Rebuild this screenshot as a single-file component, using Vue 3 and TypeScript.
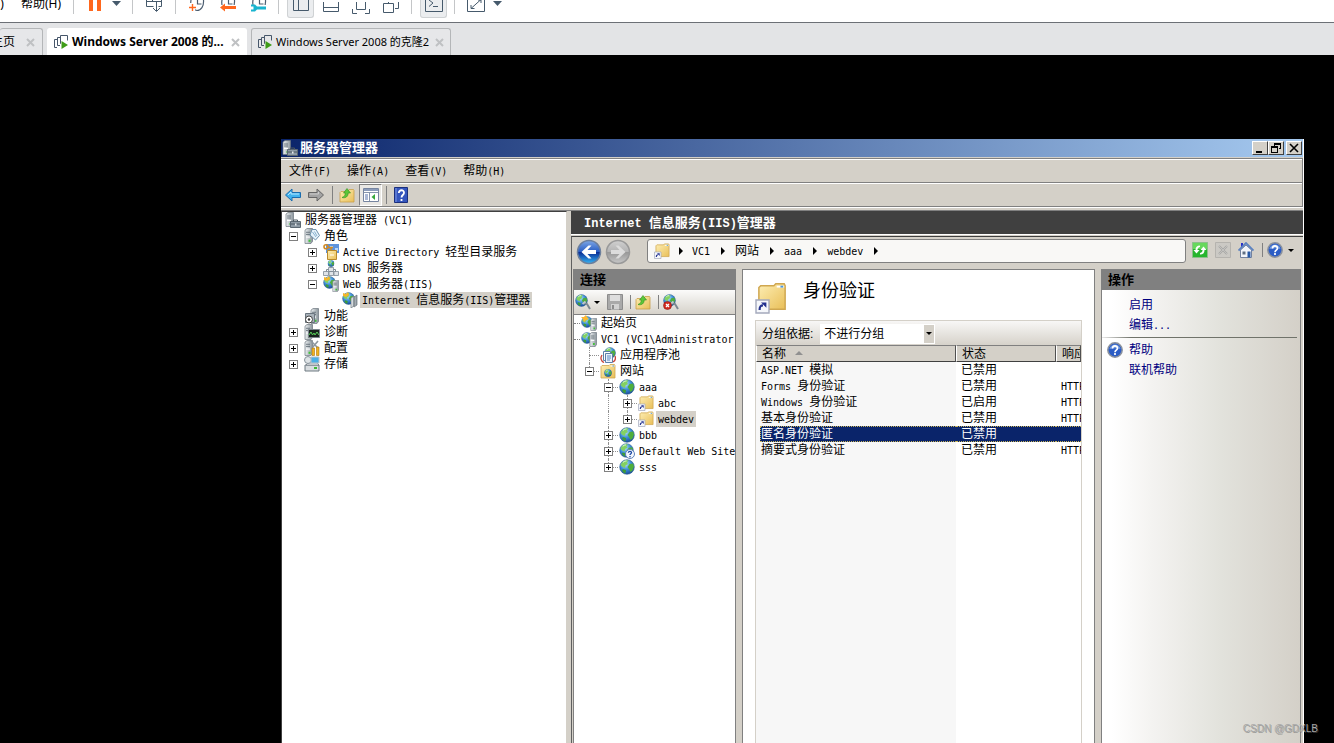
<script setup lang="ts">
import { h, ref } from 'vue'

type Cell = '' | 'v' | 't' | 'l'
interface Node {
  label: string
  icon: string
  level: number
  cells?: Cell[]
  open?: boolean
  selected?: boolean
}

/* Splits mixed text so that Latin runs use the half-width face. */
const Mix = (props: { t: string }) =>
  h(
    'span',
    { class: 'mix' },
    (props.t.match(/[\x00-\x7f]+|[^\x00-\x7f]+/g) ?? []).map((run) =>
      h('span', { class: run.charCodeAt(0) < 128 ? 'lat' : 'cjk' }, run),
    ),
  )
Mix.props = ['t']

const menus = ['文件(F)', '操作(A)', '查看(V)', '帮助(H)']

const serverTree: Node[] = [
  { label: '服务器管理器 (VC1)', icon: 'toolbox', level: 0 },
  { label: '角色', icon: 'roles', level: 1, open: true },
  { label: 'Active Directory 轻型目录服务', icon: 'ad', level: 2, open: false },
  { label: 'DNS 服务器', icon: 'dns', level: 2, open: false },
  { label: 'Web 服务器(IIS)', icon: 'web', level: 2, open: true },
  { label: 'Internet 信息服务(IIS)管理器', icon: 'iis', level: 3, selected: true },
  { label: '功能', icon: 'feature', level: 1 },
  { label: '诊断', icon: 'diag', level: 1, open: false },
  { label: '配置', icon: 'config', level: 1, open: false },
  { label: '存储', icon: 'storage', level: 1, open: false },
]

const siteTree: Node[] = [
  { label: '起始页', icon: 'start', level: 0, cells: [] },
  { label: 'VC1 (VC1\\Administrator)', icon: 'vc', level: 0, cells: [] },
  { label: '应用程序池', icon: 'pool', level: 1, cells: ['t'] },
  { label: '网站', icon: 'sites', level: 1, cells: ['l'], open: true },
  { label: 'aaa', icon: 'globe', level: 2, cells: ['', 't'], open: true },
  { label: 'abc', icon: 'link', level: 3, cells: ['', 'v', 't'], open: false },
  { label: 'webdev', icon: 'link', level: 3, cells: ['', 'v', 'l'], open: false, selected: true },
  { label: 'bbb', icon: 'globe', level: 2, cells: ['', 't'], open: false },
  { label: 'Default Web Site', icon: 'globeq', level: 2, cells: ['', 't'], open: false },
  { label: 'sss', icon: 'globe', level: 2, cells: ['', 'l'], open: false },
]

const crumbs = ['VC1', '网站', 'aaa', 'webdev']

const rows = [
  { name: 'ASP.NET 模拟', state: '已禁用', reply: '' },
  { name: 'Forms 身份验证', state: '已禁用', reply: 'HTTP 302' },
  { name: 'Windows 身份验证', state: '已启用', reply: 'HTTP 401' },
  { name: '基本身份验证', state: '已禁用', reply: 'HTTP 401' },
  { name: '匿名身份验证', state: '已禁用', reply: '' },
  { name: '摘要式身份验证', state: '已禁用', reply: 'HTTP 401' },
]
const current = ref(4)
const group = ref('不进行分组')
</script>

<template>
  <div class="page">
    <svg class="defs" aria-hidden="true">
      <defs>
        <linearGradient id="gy" x1="0" y1="0" x2="1" y2="1"><stop offset="0" stop-color="#fdeeb4" /><stop offset="1" stop-color="#e9bf58" /></linearGradient>
        <linearGradient id="gs" x1="0" y1="0" x2="1" y2="0"><stop offset="0" stop-color="#eef1f3" /><stop offset="1" stop-color="#8b959c" /></linearGradient>
        <radialGradient id="gb" cx=".4" cy=".3" r=".8"><stop offset="0" stop-color="#b5e6fc" /><stop offset=".5" stop-color="#3a8ad6" /><stop offset="1" stop-color="#123c8c" /></radialGradient>
        <linearGradient id="gn" x1="0" y1="0" x2="0" y2="1"><stop offset="0" stop-color="#7da7e6" /><stop offset=".48" stop-color="#2b5fc4" /><stop offset=".52" stop-color="#0b2f96" /><stop offset="1" stop-color="#35b4f4" /></linearGradient>
        <linearGradient id="gg" x1="0" y1="0" x2="0" y2="1"><stop offset="0" stop-color="#d0d0d0" /><stop offset=".48" stop-color="#b4b4b4" /><stop offset=".52" stop-color="#989898" /><stop offset="1" stop-color="#c8c8c8" /></linearGradient>
      </defs>
      <symbol id="srv" viewBox="0 0 9 15" preserveAspectRatio="none"><path d="M1 2 3 .5h5.500v12L7 14.500H1z" fill="url(#gs)" stroke="#6d777f" stroke-width=".7" /><path d="M2 4h4M2 6h4" stroke="#59656e" stroke-width=".8" /><path d="M2 8.500h4" stroke="#fff" /><path d="M4.500 11h2v2h-2z" fill="#43c33c" /></symbol>
      <symbol id="globe" viewBox="0 0 16 16"><circle cx="8" cy="8" r="7.300" fill="url(#gb)" stroke="#2b5c8f" stroke-width=".6" /><path d="M3 3.500C5 1 8 1 9.500 1.500L8 3.500l1 1.500-2.500 1.500L6 9 3.500 8 1.500 6z" fill="#83d162" /><path d="m10.500 5 3.500-.500 1 3-1.500 4-2 1.500-1.500-3-1.500-2z" fill="#4fae3c" /><path d="m4 10 3 1-.500 3.500C4.500 14 3.500 12.500 3 11z" fill="#3e9c38" /><path d="M4 3.500c1-1 2-1.500 3.500-1.500" stroke="#e2ffe0" fill="none" /></symbol>
      <symbol id="toolbox" viewBox="0 0 16 16"><use href="#srv" x="0" y="0" width="9" height="15" /><path d="M5.500 9.500h10v6h-10z" fill="#8f9ba6" stroke="#5c6872" /><path d="M8.500 9.500V8h4v1.500M6 12h9" stroke="#4a5660" fill="none" /><path d="M10 11.500h1.500v2H10z" fill="#e8ecef" /></symbol>
      <symbol id="roles" viewBox="0 0 16 16"><use href="#srv" x="0" y="0" width="9" height="16" /><path d="m8 1.500 4 0 3.500 6-4 4.500L6 7z" fill="#e6f2fa" stroke="#6e93ad" /><path d="m8.500 4 3.500 5M10.500 3.500 13 8" stroke="#8bb3cf" /></symbol>
      <symbol id="ad" viewBox="0 0 16 16"><path d="M3 0h13v9H3z" fill="#5e93dc" /><path d="M7 2h3v2H7zM12 4h3v3h-3z" fill="#b8d5f7" /><path d="M4.500 6.500h9v9h-9z" fill="url(#gy)" stroke="#b98a2b" /><circle cx="3" cy="2.800" r="2" fill="none" stroke="#d28b25" stroke-width="1.600" /><path d="M4.500 3.500H10M8 4v2" stroke="#d28b25" stroke-width="1.500" /><path d="M7 11h4" stroke="#fff" /></symbol>
      <symbol id="dns" viewBox="0 0 16 16"><use href="#globe" x="4.500" y="0" width="7" height="7" /><path d="M8 7v3M3.500 13V9.500h9V13" stroke="#7e8a94" fill="none" /><path d="M5.500 7.500h5v4h-5zM.5 11.500h5v4h-5zM6 11.500h4.500v4H6zM11 11.500h4.500v4H11z" fill="#dfe4e8" stroke="#808c96" stroke-width=".8" /></symbol>
      <symbol id="web" viewBox="0 0 16 16"><use href="#globe" x="0" y="0" width="13" height="13" /><path d="m1 1 3 1 2-2 1 3-3 2-3-1z" fill="#f4b52c" /><use href="#srv" x="9" y="4" width="7" height="12" /></symbol>
      <symbol id="iis" viewBox="0 0 16 16"><use href="#globe" x="0" y="0" width="13" height="13" /><path d="m1 1 3 1 2-2 1 3-3 2-3-1z" fill="#f4b52c" /><path d="m9 6 3-2v10l-3 2zM12 5l3-2v10l-3 2z" fill="url(#gs)" stroke="#6b757d" stroke-width=".7" /></symbol>
      <symbol id="feature" viewBox="0 0 16 16"><use href="#srv" x="6" y="0" width="9" height="16" /><path d="M1.500 5.500h9v9h-9z" fill="#a9b2ba" stroke="#6a757f" /><circle cx="5" cy="11.500" r="3.500" fill="#fff" stroke="#444" /><circle cx="5" cy="11.500" r="1.200" fill="#333" /></symbol>
      <symbol id="diag" viewBox="0 0 16 16"><use href="#srv" x="0" y="0" width="9" height="16" /><path d="M4.500 5.500h11v8h-11z" fill="#17231d" stroke="#7b858c" /><path d="m5 11 2-3 1.500 3L10 9l1 2 2-3 2 3" stroke="#58d05a" fill="none" /></symbol>
      <symbol id="config" viewBox="0 0 16 16"><use href="#srv" x="0" y="0" width="9" height="16" /><path d="m7 1 7 7M14 1 8 8" stroke="#8d979f" stroke-width="1.600" /><path d="M8 8h2.500v7.500H8zM12.500 7H15v8.500h-2.500z" fill="#f3b21f" stroke="#a87612" stroke-width=".6" /></symbol>
      <symbol id="storage" viewBox="0 0 16 16"><path d="M1 9h14v6H1z" fill="#d9dde0" stroke="#6f7a82" /><path d="M2 9 4 7h9l2 2z" fill="#eef0f2" stroke="#5f6a72" stroke-width=".6" /><circle cx="4" cy="4" r="3.500" fill="#dfe4e7" stroke="#87929a" /><path d="M7 1h8v6H7z" fill="#4dafe5" stroke="#b8c2c9" /><path d="M10 12h3" stroke="#3cba36" stroke-width="2" /></symbol>
      <symbol id="start" viewBox="0 0 16 16"><use href="#globe" x="0" y="1" width="12" height="12" /><path d="m0 2 3 0 2-2 1 2.500L8 4 5 5 3 7 2 4z" fill="#ffb62e" /><use href="#srv" x="9" y="3" width="7" height="13" /></symbol>
      <symbol id="vc" viewBox="0 0 16 16"><use href="#globe" x="0" y="1" width="12" height="12" /><use href="#srv" x="8" y="1" width="8" height="15" /></symbol>
      <symbol id="pool" viewBox="0 0 16 16"><use href="#globe" x="4" y="0" width="12" height="12" /><path d="M3.500 4.500h7v9h-7z" fill="#fff" stroke="#5d7fa8" /><path d="M5.500 6.500h7v9h-7z" fill="#eaf2fb" stroke="#5d7fa8" /><path d="M7 9h4M7 11h4M7 13h3" stroke="#5b88c4" /><path d="M2 8c-2 3-1 6 2 7.500M15 9c1 3 0 5-2 6" stroke="#c84238" fill="none" stroke-width="1.300" /></symbol>
      <symbol id="folder" viewBox="0 0 16 16"><path d="M1 3.500 2 2.500h7l1-1h4.500l.500 1V15H1z" fill="url(#gy)" stroke="#d0a750" stroke-width=".8" /><path d="M10.500 3h4" stroke="#fff" /><path d="M12.500 3h1.500" stroke="#4a97dd" /></symbol>
      <symbol id="sites" viewBox="0 0 16 16"><use href="#folder" width="16" height="16" /><use href="#globe" x="4" y="6" width="8" height="8" /></symbol>
      <symbol id="link" viewBox="0 0 16 16"><use href="#folder" x="1" y="-1" width="15" height="16" /><path d="M.5 9h6.500v6.500H.5z" fill="#f5f7fb" stroke="#a4a9bc" stroke-width=".7" /><path d="M2.300 14c0-1.700.4-2.300 1.700-2.300" stroke="#22308e" stroke-width="1.100" fill="none" /><path d="M3 10.200h2.700v2.700z" fill="#22308e" /></symbol>
      <symbol id="globeq" viewBox="0 0 16 16"><use href="#globe" width="15" height="15" /><circle cx="11" cy="11" r="4.500" fill="#f4f7fc" stroke="#5c7fb9" /><path d="M9.300 9.800c.2-2 3.400-1.800 3.200 0-.1 1-1.500 1-1.500 2.200M11 13v1.200" stroke="#1c48a3" stroke-width="1.300" fill="none" /></symbol>
      <symbol id="up" viewBox="0 0 16 16"><path d="M1 5.500 2 4.500h7l1-2h4.500l.500 1V15H1z" fill="url(#gy)" stroke="#c9a04a" stroke-width=".8" /><path d="M3 10.500c2.500-1 3.200-2.500 3.300-4.500H4.500L8 1.500 11.500 6H9.200c0 3.500-2.500 5.500-6.200 4.500z" fill="#5cc638" stroke="#2f8f1e" stroke-width=".6" /></symbol>
      <symbol id="left" viewBox="0 0 16 16"><path d="M.5 8 7 2v3.500h8.500v5H7V14z" fill="#41b3ee" stroke="#1a6cae" /><path d="m3 8 3-3v2h8" stroke="#b5e6ff" fill="none" /></symbol>
      <symbol id="right" viewBox="0 0 16 16"><path d="M15.500 8 9 2v3.500H.5v5H9V14z" fill="#a3a3a3" stroke="#666" /><path d="M2 7h8.500V5" stroke="#ccc" fill="none" /></symbol>
      <symbol id="pane" viewBox="0 0 16 16"><path d="M.5 1.500h15v13H.5z" fill="#fff" stroke="#7785a0" /><path d="M1 2h14v2H1z" fill="#8c9cba" /><path d="M6.500 6v8M1 5.500h14" stroke="#8795ad" /><path d="M2 8h3M2 10h3M2 12h3" stroke="#5873ac" /><path d="M12 7v6L8.500 10z" fill="#38a83c" /></symbol>
      <symbol id="book" viewBox="0 0 14 16"><path d="M.5.5h13v15H.5z" fill="#3455bd" stroke="#1b2f7c" /><path d="M2 1v14" stroke="#7f9ae6" /><path d="M4.800 6c0-3.800 5.400-3.500 5.200-.3C10 8 7.500 8 7.500 10.500M7.500 12v2" stroke="#fff" stroke-width="1.800" fill="none" /></symbol>
      <symbol id="plug" viewBox="0 0 16 16"><use href="#globe" width="13" height="13" /><path d="m9 9 3 1 3 5" stroke="#7b8791" stroke-width="2" fill="none" /><path d="m7.500 10 3-2.500" stroke="#bcc6ce" stroke-width="2" /></symbol>
      <symbol id="unplug" viewBox="0 0 16 16"><use href="#plug" width="16" height="16" /><circle cx="4.500" cy="11.500" r="4" fill="#d32b20" stroke="#8b1711" stroke-width=".6" /><path d="m3 10 3 3M6 10l-3 3" stroke="#fff" stroke-width="1.300" /></symbol>
      <symbol id="save" viewBox="0 0 16 16"><path d="M.5.5h15v15H.5z" fill="#a9a9a9" stroke="#8c8c8c" /><path d="M3 1h10v6H3z" fill="#dedede" /><path d="M4 10h8v5.500H4z" fill="#d2d2d2" /><path d="M5 11h2v4H5z" fill="#8c8c8c" /></symbol>
      <symbol id="refresh" viewBox="0 0 16 16"><path d="M.5.5h15v15H.5z" fill="#27b52e" stroke="#8bbf8a" /><path d="M1 1h14v6H1z" fill="#67d85c" /><path d="M1.500 8 4.500 11.500 7.500 8H5.500C5.500 6.500 6 5.500 8 5V3.500C5 3.500 3.500 5 3.500 8zM14.500 8l-3-3.500L8.500 8h2c0 1.500-.500 2.500-2.500 3v1.500c3 0 4.500-1.500 4.500-4.500z" fill="#fff" /></symbol>
      <symbol id="stop" viewBox="0 0 16 16"><path d="M.5.5h15v15H.5z" fill="#cbc9c4" stroke="#b5b3ae" /><path d="m4 4 8 8M12 4l-8 8" stroke="#a6a6a4" stroke-width="2" /><path d="m4 4 8 8M12 4l-8 8" stroke="#d5d4d1" stroke-width=".6" /></symbol>
      <symbol id="home" viewBox="0 0 16 16"><path d="M3 1h2v4H3z" fill="#2732cb" /><path d="M2.500 8v7.500h11V8L8 3z" fill="#f2f5fa" stroke="#73829e" /><path d="M.5 8.500 8 1l7.500 7.500" stroke="#5d83c0" stroke-width="1.800" fill="none" /><path d="M9.500 9.500h3v6h-3z" fill="#2859a6" /><path d="M4.500 9.500h3v3h-3z" fill="#5f6e82" /></symbol>
      <symbol id="help" viewBox="0 0 16 16"><circle cx="8" cy="8" r="7.200" fill="#2c5dc5" stroke="#8c929d" stroke-width="1.500" /><path d="M2.500 7c1-6 10-6 11 0-4-1-7-1-11 0z" fill="#7199e0" /><path d="M5.500 6.500c0-3.500 5-3.300 5-.3 0 2-2.500 1.800-2.500 4M8 11v2" stroke="#fff" stroke-width="1.700" fill="none" /></symbol>
      <symbol id="vm" viewBox="0 0 16 16"><path d="M4 13.500H1.500v-8H4" fill="none" stroke="#46566a" /><path d="M7 11.500H4.500v-8H7" fill="none" stroke="#46566a" /><path d="M8 9.500h-.500v-8h7v5" fill="none" stroke="#46566a" /><path d="m8.500 7 6.500 4-6.500 4z" fill="#3f9c17" /></symbol>
      <symbol id="ring" viewBox="0 0 20 14"><path d="M4 0C3 6 5 10 10 10.500c4 0 7-4 6.500-10.500M10.500 0v4h4" fill="none" stroke="#4a5c6f" stroke-width="1.200" /></symbol>
    </svg>

    <header class="host">
      <button class="hm clip">)</button>
      <button class="hm help">帮助(H)</button>
      <i class="hs"></i>
      <button class="hb" aria-label="暂停"><svg width="20" height="14"><path d="M4 0h4v11H4zM12 0h4v11h-4z" fill="#ff671d" /></svg></button>
      <button class="hb caret" aria-label="电源菜单"><svg width="9" height="7"><path d="M0 1h9L4.500 6z" fill="#465a6c" /></svg></button>
      <i class="hs s2"></i>
      <button class="hb" aria-label="发送按键"><svg width="20" height="14"><path d="M2.500 0v6.500h7M17.500 0v6.500h-3M2 1.500h16M8.500 0v2M12.500 2v9M9 8l3.500 3.500L16 8" fill="none" stroke="#465a6c" /></svg></button>
      <i class="hs s3"></i>
      <div class="snaps">
        <button class="hb" aria-label="拍摄快照"><svg width="20" height="14"><use href="#ring" width="20" height="14" /><path d="M0 3h8v9H0z" fill="#fff" /><path d="M2 7.500h7M5.500 4v7" stroke="#ff671d" stroke-width="1.400" /></svg></button>
        <button class="hb" aria-label="恢复快照"><svg width="20" height="14"><use href="#ring" width="20" height="14" /><path d="M1 5h18v8H1z" fill="#fff" /><path d="m2 7.500 5-4V6h11v3H7v2.500z" fill="#ff671d" /></svg></button>
        <button class="hb" aria-label="管理快照"><svg width="20" height="14"><use href="#ring" width="20" height="14" /><path d="M1 5h18v8H1z" fill="#fff" /><path d="M2 4.500h4l2 2h9v3H8l-2 2H2v-2h2.500v-3H2z" fill="#19b4cf" /></svg></button>
      </div>
      <i class="hs s4"></i>
      <div class="views">
        <button class="hb on" aria-label="显示库"><svg width="20" height="14"><path d="M2.500-2v12.500h15V-2M7.500 0v10" fill="none" stroke="#465a6c" /></svg></button>
        <button class="hb" aria-label="缩略图栏"><svg width="20" height="14"><path d="M2.500-2v11.500h15V-2M2 5.500h16" fill="none" stroke="#465a6c" /></svg></button>
        <button class="hb" aria-label="全屏"><svg width="20" height="14"><path d="M5.500-2v9.500h9V-2M1.500 7v4.500H6M14 11.500h4.500V7" fill="none" stroke="#465a6c" /></svg></button>
        <button class="hb" aria-label="Unity"><svg width="20" height="14"><path d="M2.500 1.500h10v9h-10zM14 6.500h3.500V0M7.500 0v1" fill="none" stroke="#465a6c" /></svg></button>
      </div>
      <i class="hs s5"></i>
      <button class="hb on" aria-label="控制台"><svg width="20" height="14"><path d="M1.500-2v13.500h17V-2M5 0l4 3-4 3.500M9 6.500h5" fill="none" stroke="#465a6c" /></svg></button>
      <i class="hs s6"></i>
      <button class="hb" aria-label="拉伸"><svg width="20" height="14"><path d="M1.500-2v13.500h17V-2M5 5v3.500h3.500M5 8.500l10-9M12 0h3v3" fill="none" stroke="#465a6c" /></svg></button>
      <button class="hb caret" aria-label="拉伸菜单"><svg width="9" height="7"><path d="M0 1h9L4.500 6z" fill="#465a6c" /></svg></button>
    </header>

    <nav class="tabs">
      <div class="tab first"><span class="tt">主页</span><button class="tx" aria-label="关闭"><svg width="9" height="9"><path d="m1 1 7 7M8 1 1 8" /></svg></button></div>
      <div class="tab active"><svg class="i16"><use href="#vm" /></svg><span class="tt">Windows Server 2008 的...</span><button class="tx" aria-label="关闭"><svg width="9" height="9"><path d="m1 1 7 7M8 1 1 8" /></svg></button></div>
      <div class="tab"><svg class="i16"><use href="#vm" /></svg><span class="tt">Windows Server 2008 的克隆2</span><button class="tx" aria-label="关闭"><svg width="9" height="9"><path d="m1 1 7 7M8 1 1 8" /></svg></button></div>
    </nav>

    <main class="win">
      <div class="title">
        <svg class="i16"><use href="#toolbox" /></svg>
        <h1>服务器管理器</h1>
        <button class="wb" aria-label="最小化"><svg width="14" height="12"><path d="M3 9h6v2H3z" /></svg></button>
        <button class="wb" aria-label="还原"><svg width="14" height="12"><path d="M5 1h7v6h-2V6h1V3H6v1H5zM2 4h7v7H2zm1 2v4h5V6z" fill-rule="evenodd" /></svg></button>
        <button class="wb close" aria-label="关闭"><svg width="14" height="12"><path d="m3 2 8 8M11 2l-8 8" stroke="#000" stroke-width="1.600" /></svg></button>
      </div>
      <div class="menubar"><button v-for="m in menus" :key="m"><Mix :t="m" /></button></div>
      <div class="toolbar">
        <button aria-label="后退"><svg class="i16"><use href="#left" /></svg></button>
        <button aria-label="前进"><svg class="i16"><use href="#right" /></svg></button>
        <i class="sep"></i>
        <button aria-label="向上"><svg class="i16"><use href="#up" /></svg></button>
        <button class="pressed" aria-label="显示/隐藏控制台树"><svg class="i16"><use href="#pane" /></svg></button>
        <i class="sep"></i>
        <button aria-label="帮助"><svg class="i16"><use href="#book" /></svg></button>
      </div>

      <div class="split">
        <aside class="stree">
          <div v-for="n in serverTree" :key="n.label" class="row" :style="{ paddingLeft: Math.max(0, n.level - 1) * 19 + 2 + 'px' }">
            <span v-if="n.level" class="cell"><button v-if="n.open !== undefined" class="ex" :class="{ plus: !n.open }" aria-label="展开或折叠"></button></span>
            <svg class="i16"><use :href="'#' + n.icon" /></svg>
            <span class="lb" :class="{ sel: n.selected }"><Mix :t="n.label" /></span>
          </div>
        </aside>

        <section class="iis">
          <h2 class="bigbar"><Mix t="Internet 信息服务(IIS)管理器" /></h2>
          <div class="inner">
            <div class="addr">
              <button class="nav" aria-label="后退"><svg width="26" height="26" viewBox="0 0 26 26"><circle cx="13" cy="13" r="11.500" fill="url(#gn)" stroke="#6c7f9c" stroke-width="1.500" /><path d="m5.500 13 7-6.500h3L11.500 11H20v4h-8.500l4 4.500h-3z" fill="#fff" /></svg></button>
              <button class="nav" aria-label="前进"><svg width="26" height="26" viewBox="0 0 26 26"><circle cx="13" cy="13" r="11.500" fill="url(#gg)" stroke="#999" stroke-width="1.500" /><path d="m20.500 13-7-6.500h-3l4 4.500H6v4h8.500l-4 4.500h3z" fill="#dcdcdc" /></svg></button>
              <div class="path">
                <svg class="i16"><use href="#link" /></svg>
                <i class="tri"></i>
                <template v-for="c in crumbs" :key="c"><button><Mix :t="c" /></button><i class="tri"></i></template>
              </div>
              <button class="ab" aria-label="刷新"><svg class="i16"><use href="#refresh" /></svg></button>
              <button class="ab" aria-label="停止"><svg class="i16"><use href="#stop" /></svg></button>
              <button class="ab" aria-label="主页"><svg class="i16"><use href="#home" /></svg></button>
              <i class="asep"></i>
              <button class="ab q" aria-label="帮助"><svg class="i16"><use href="#help" /></svg><i class="down"></i></button>
            </div>

            <div class="cols">
              <section class="conn">
                <h3>连接</h3>
                <div class="ctool">
                  <button aria-label="连接"><svg class="i16"><use href="#plug" /></svg><i class="down"></i></button>
                  <button aria-label="保存"><svg class="i16"><use href="#save" /></svg></button>
                  <i class="csep"></i>
                  <button aria-label="向上"><svg class="i16"><use href="#up" /></svg></button>
                  <i class="csep"></i>
                  <button aria-label="断开"><svg class="i16"><use href="#unplug" /></svg></button>
                </div>
                <div class="ctree">
                  <div v-for="n in siteTree" :key="n.label" class="row">
                    <span class="stub" :class="{ dots: n.level === 0 }"></span>
                    <span v-for="(c, k) in n.cells" :key="k" class="cell guide" :class="c && 'g' + c"><button v-if="n.open !== undefined && k === n.level - 1" class="ex" :class="{ plus: !n.open }" aria-label="展开或折叠"></button></span>
                    <svg class="i16"><use :href="'#' + n.icon" /></svg>
                    <span class="lb" :class="{ sel: n.selected }"><Mix :t="n.label" /></span>
                  </div>
                </div>
              </section>

              <section class="feature">
                <div class="fhead"><svg width="32" height="32"><use href="#link" /></svg><h2>身份验证</h2></div>
                <div class="list">
                  <div class="group">
                    <label for="grp">分组依据:</label>
                    <div class="pick"><select id="grp" v-model="group"><option>不进行分组</option><option>状态</option></select><span class="arrow"><i class="down"></i></span></div>
                  </div>
                  <table>
                    <colgroup><col class="c1" /><col class="c2" /><col /></colgroup>
                    <thead><tr><th>名称<i class="asc"></i></th><th>状态</th><th>响应类型</th></tr></thead>
                    <tbody>
                      <tr v-for="(r, k) in rows" :key="r.name" :class="{ cur: k === current }" @click="current = k">
                        <td><div><Mix :t="r.name" /></div></td><td><div>{{ r.state }}</div></td><td><div><Mix :t="r.reply" /></div></td>
                      </tr>
                    </tbody>
                  </table>
                </div>
              </section>

              <section class="actions">
                <h3>操作</h3>
                <div class="acts">
                  <a href="#">启用</a>
                  <a href="#"><Mix t="编辑..." /></a>
                  <hr />
                  <a href="#" class="wi"><svg class="i16"><use href="#help" /></svg>帮助</a>
                  <a href="#">联机帮助</a>
                </div>
              </section>
            </div>
          </div>
        </section>
      </div>
    </main>
    <div class="mark">CSDN @GDXLB</div>
  </div>
</template>

<style>
html,
body {
  margin: 0;
  background: #000;
}
.mix {
  white-space: pre;
}
.mix .lat {
  font-family: "DejaVu Sans Mono", "Liberation Mono", monospace;
  font-size: 10px;
}
.bigbar .lat {
  font-family: "Liberation Mono", monospace;
  font-size: 12px;
}
</style>

<style scoped>
* {
  box-sizing: border-box;
}
.page {
  position: relative;
  display: flex;
  flex-direction: column;
  height: 100vh;
  overflow: hidden;
  font: 12px/16px "Liberation Sans", "Noto Sans CJK SC", sans-serif;
  color: #000;
}
.defs {
  position: absolute;
  width: 0;
  height: 0;
}
button {
  margin: 0;
  padding: 0;
  border: 0;
  background: none;
  font: inherit;
  color: inherit;
  flex: none;
}
button svg,
.i16 {
  display: block;
  flex: none;
}
.i16 {
  width: 16px;
  height: 16px;
}
h1,
h2,
h3 {
  margin: 0;
}

/* host toolbar */
.host {
  display: flex;
  align-items: flex-start;
  flex: none;
  height: 23px;
  overflow: hidden;
  background: #fff;
  border-bottom: 1px solid #6c7076;
}
.hm {
  line-height: 4px;
  height: 8px;
  font-family: "Noto Sans", "Noto Sans CJK SC", sans-serif;
}
.clip {
  width: 4px;
}
.help {
  margin-left: 16px;
  width: 42px;
  white-space: nowrap;
}
.hs {
  flex: none;
  width: 1px;
  height: 14px;
  margin: 0 11px;
  background: #c4c6c8;
}
.s2 {
  margin: 0 11px 0 11px;
}
.s3 {
  margin: 0 11px;
}
.s4 {
  margin: 0 8px 0 9px;
}
.s5 {
  margin: 0 8px 0 10px;
}
.s6 {
  margin: 0 11px 0 7px;
}
.caret {
  margin-left: 7px;
}
.snaps {
  display: flex;
  gap: 11px;
}
.views {
  display: flex;
  gap: 10px;
}
.views .on {
  margin-right: -3px;
}
.on {
  width: 27px;
  height: 18px;
  padding: 0 3px 3px;
  border: 1px solid #cfd2d4;
  border-top: 0;
  border-radius: 0 0 3px 3px;
  background: #ebedef;
}

/* host tabs */
.tabs {
  display: flex;
  align-items: flex-end;
  gap: 4px;
  flex: none;
  height: 32px;
  background: #e3e4e6;
}
.tab {
  display: flex;
  align-items: center;
  height: 27px;
  width: 200px;
  padding: 0 6px 0 5px;
  border: 1px solid #b4b6b8;
  border-bottom: 0;
  border-radius: 3px 3px 0 0;
  font: 11px/16px "Noto Sans", "Noto Sans CJK SC", sans-serif;
  background: #e6e7e9;
}
.tab .tt {
  flex: 1;
  margin-left: 3px;
  white-space: nowrap;
}
.tab.first {
  width: 43px;
  border-left: 0;
  padding-left: 0;
  font-size: 12px;
}
.tab.first .tt {
  display: flex;
  justify-content: flex-end;
  flex: none;
  width: 15px;
  margin: 0 11px 0 0;
  overflow: hidden;
}
.tab.active {
  background: #fff;
  border-color: #fff;
  font-size: 12px;
  font-weight: 700;
}
.tx path {
  stroke: #bfc1c3;
  stroke-width: 2;
}

/* window */
.win {
  display: flex;
  flex-direction: column;
  flex: 1;
  min-height: 0;
  margin: 84px 30px 0 281px;
  background: #d4d0c8;
  border-right: 1px solid #fff;
}
.title {
  display: flex;
  align-items: center;
  flex: none;
  height: 18px;
  padding: 0 1px;
  background: linear-gradient(to right, #0a246a, #a6caf0);
}
.title h1 {
  flex: 1;
  margin-left: 2px;
  font-size: 13px;
  line-height: 18px;
  color: #fff;
}
.wb {
  width: 16px;
  height: 14px;
  padding: 0;
  background: #d4d0c8;
  border: 1px solid;
  border-color: #fff #404040 #404040 #fff;
  overflow: hidden;
}
.close {
  margin-left: 2px;
}
.menubar,
.toolbar {
  display: flex;
  align-items: center;
  flex: none;
  border-right: 1px solid #808080;
}
.menubar {
  gap: 16px;
  height: 25px;
  margin-top: 1px;
  padding: 2px 0 0 8px;
  border-top: 1px solid #808080;
  border-bottom: 1px solid #808080;
  box-shadow: inset 0 1px #fff;
}
.toolbar {
  height: 24px;
  padding: 1px 4px 0;
  border-bottom: 1px solid #808080;
  box-shadow: inset 0 1px #fff, 0 1px #fff;
}
.toolbar button {
  margin-right: 7px;
}
.sep {
  width: 1px;
  height: 18px;
  margin: 0 6px 0 1px;
  background: #808080;
}
.toolbar .pressed {
  width: 23px;
  height: 22px;
  margin: 0 7px 0 -3px;
  padding: 2px 3px;
  border: 1px solid;
  border-color: #808080 #fff #fff #808080;
  background: #eae8e4;
}
.toolbar .pressed + .sep {
  margin-left: -3px;
}
.split {
  display: flex;
  flex: 1;
  min-height: 0;
  gap: 4px;
  margin-top: 3px;
  border-top: 1px solid #808080;
}
.stree {
  flex: none;
  width: 286px;
  background: #fff;
  border: solid #404040;
  border-width: 1px 0 0 1px;
  border-right: 1px solid #d4d0c8;
}
.row {
  display: flex;
  align-items: center;
  height: 16px;
  white-space: nowrap;
}
.cell {
  position: relative;
  display: flex;
  flex: none;
  justify-content: center;
  align-items: center;
  width: 19px;
  height: 16px;
}
.row > .i16 {
  margin: 0 2px 0 1px;
}
.ex {
  position: relative;
  z-index: 1;
  width: 9px;
  height: 9px;
  border: 1px solid #808080;
  background: linear-gradient(#000, #000) center / 5px 1px no-repeat #fff;
}
.ex.plus {
  background: linear-gradient(#000, #000) center / 5px 1px no-repeat, linear-gradient(#000, #000) center / 1px 5px no-repeat #fff;
}
.lb {
  height: 16px;
  padding: 0 2px;
  line-height: 17px;
}
.lb.sel {
  background: #d4d0c8;
}
.stub {
  flex: none;
  width: 6px;
  height: 1px;
}
.stub.dots {
  border-top: 1px dotted #808080;
}
.guide::before,
.guide::after {
  content: "";
  position: absolute;
  left: 9px;
}
.gv::before,
.gt::before,
.gl::before {
  top: 0;
  height: 16px;
  border-left: 1px dotted #909090;
}
.gl::before {
  height: 8px;
}
.gt::after,
.gl::after {
  top: 8px;
  width: 10px;
  border-top: 1px dotted #909090;
}

/* IIS pane */
.iis {
  display: flex;
  flex-direction: column;
  flex: 1;
  min-width: 0;
}
.bigbar {
  flex: none;
  height: 24px;
  padding-left: 13px;
  border-bottom: 1px solid #fff;
  background: #404040;
  color: #fff;
  font-size: 13px;
  line-height: 23px;
}
.inner {
  display: flex;
  flex-direction: column;
  flex: 1;
  min-height: 0;
  margin-top: 1px;
  padding-left: 1px;
  border-top: 1px solid #404040;
  border-left: 1px solid #606060;
}
.addr {
  display: flex;
  align-items: flex-start;
  flex: none;
  height: 32px;
  padding: 2px 9px 0 3px;
}
.nav {
  margin-right: 3px;
}
.path {
  display: flex;
  align-items: center;
  flex: 1;
  min-width: 0;
  height: 24px;
  margin: 0 6px 0 13px;
  padding: 0 6px;
  border: 1px solid #808080;
  border-radius: 3px;
  background: #f9f8f6;
}
.tri {
  flex: none;
  margin: 0 9px;
  border: solid transparent;
  border-width: 4px 0 4px 4px;
  border-left-color: #000;
}
.path button + .tri {
  margin: 0 10px 0 11px;
}
.ab {
  margin: 3px 0 0 7px;
}
.path + .ab {
  margin-left: 0;
}
.asep,
.csep {
  flex: none;
  width: 1px;
  height: 14px;
  background: #808080;
}
.asep {
  margin: 4px 0 0 8px;
}
.ab.q {
  display: flex;
  align-items: center;
  margin-left: 4px;
}
.down {
  display: block;
  border: solid transparent;
  border-width: 3px 3px 0;
  border-top-color: #000;
}
.q .down {
  margin-left: 5px;
}
.cols {
  display: flex;
  flex: 1;
  min-height: 0;
  gap: 6px;
  padding-right: 2px;
}
.conn {
  display: flex;
  flex-direction: column;
  flex: none;
  width: 163px;
  border-right: 1px solid #808080;
  border-left: 1px solid #808080;
  background: #fff;
}
h3 {
  height: 21px;
  padding-left: 6px;
  background: #808080;
  font-size: 13px;
  line-height: 22px;
}
.ctool {
  display: flex;
  align-items: center;
  flex: none;
  height: 25px;
  padding-left: 1px;
  border-bottom: 1px solid #808080;
  background: linear-gradient(#fbfbfa, #d6d2ca);
}
.ctool button {
  display: flex;
  align-items: center;
}
.ctool button .down {
  margin: 0 7px 0 3px;
}
.csep {
  margin: 0 4px 0 7px;
}
.ctree {
  overflow: hidden;
}
.feature {
  display: flex;
  flex-direction: column;
  flex: 1;
  min-width: 0;
  padding: 12px 12px 0;
  border: solid #808080;
  border-width: 1px 1px 0;
  background: #fff;
}
.fhead {
  display: flex;
  height: 38px;
}
.fhead h2 {
  margin: -4px 0 0 16px;
  font-size: 18px;
  font-weight: 400;
  line-height: 26px;
}
.list {
  display: flex;
  flex-direction: column;
  flex: 1;
  min-height: 0;
  overflow: hidden;
  border: solid #d4d0c8;
  border-width: 1px 1px 0;
  background: linear-gradient(to right, #f7f7f7 200px, #fff 200px);
}
.group {
  display: flex;
  align-items: center;
  flex: none;
  height: 24px;
  padding: 1px 0 0 6px;
  background: linear-gradient(#f8f7f6, #d6d2ca);
}
.pick {
  display: flex;
  width: 115px;
  height: 20px;
  margin-left: 7px;
  padding: 1px;
  background: #fff;
}
.pick select {
  flex: 1;
  min-width: 0;
  appearance: none;
  padding: 0 0 0 3px;
  border: 0;
  background: #fff;
  color: #000;
  font: inherit;
}
.arrow {
  display: flex;
  align-items: center;
  justify-content: center;
  width: 10px;
  background: #d4d0c8;
}
table {
  width: 100%;
  table-layout: fixed;
  border-collapse: separate;
  border-spacing: 0;
}
.c1 {
  width: 200px;
}
.c2 {
  width: 100px;
}
th {
  height: 17px;
  padding: 1px 0 0 5px;
  border: 1px solid;
  border-color: #808080 #505050 #404040 #fff;
  background: #d4d0c8;
  font-weight: 400;
  line-height: 14px;
  text-align: left;
  white-space: nowrap;
  overflow: hidden;
}
.asc {
  display: inline-block;
  margin: 0 0 3px 9px;
  border: solid transparent;
  border-width: 0 4px 4px;
  border-bottom-color: #909090;
}
td {
  height: 16px;
  padding: 0;
  overflow: hidden;
  white-space: nowrap;
}
td div {
  height: 16px;
  padding-left: 5px;
  line-height: 17px;
}
td:first-child div {
  margin-left: 4px;
  padding-left: 1px;
}
.cur td div {
  background: #0a246a;
  border: dotted #c9b458;
  border-width: 1px 0;
  line-height: 15px;
  color: #fff;
}
.cur td:first-child div {
  border-left-width: 1px;
  padding-left: 0;
}

/* actions */
.actions {
  display: flex;
  flex-direction: column;
  flex: none;
  width: 200px;
  border: solid #808080;
  border-width: 0 1px;
}
.acts {
  display: flex;
  flex-direction: column;
  flex: 1;
  padding-top: 5px;
  background: linear-gradient(to right, #fff 5%, #f4f3f1 25%, #e2e2dc 60%, #d4d0c8);
}
.acts a {
  display: flex;
  align-items: center;
  height: 20px;
  padding-left: 27px;
  color: #000080;
  text-decoration: none;
}
.acts a.wi {
  gap: 6px;
  padding-left: 5px;
}
.acts hr {
  width: calc(100% - 3px);
  height: 1px;
  margin: 2px 0;
  border: 0;
  background: linear-gradient(to right, #e8e8e8, #70736a 15%, #70736a);
}
.mark {
  position: absolute;
  right: 16px;
  bottom: 6px;
  font-size: 10px;
  line-height: 16px;
  color: #a8a8a8;
  text-shadow: 1px 1px #6668;
}
</style>
